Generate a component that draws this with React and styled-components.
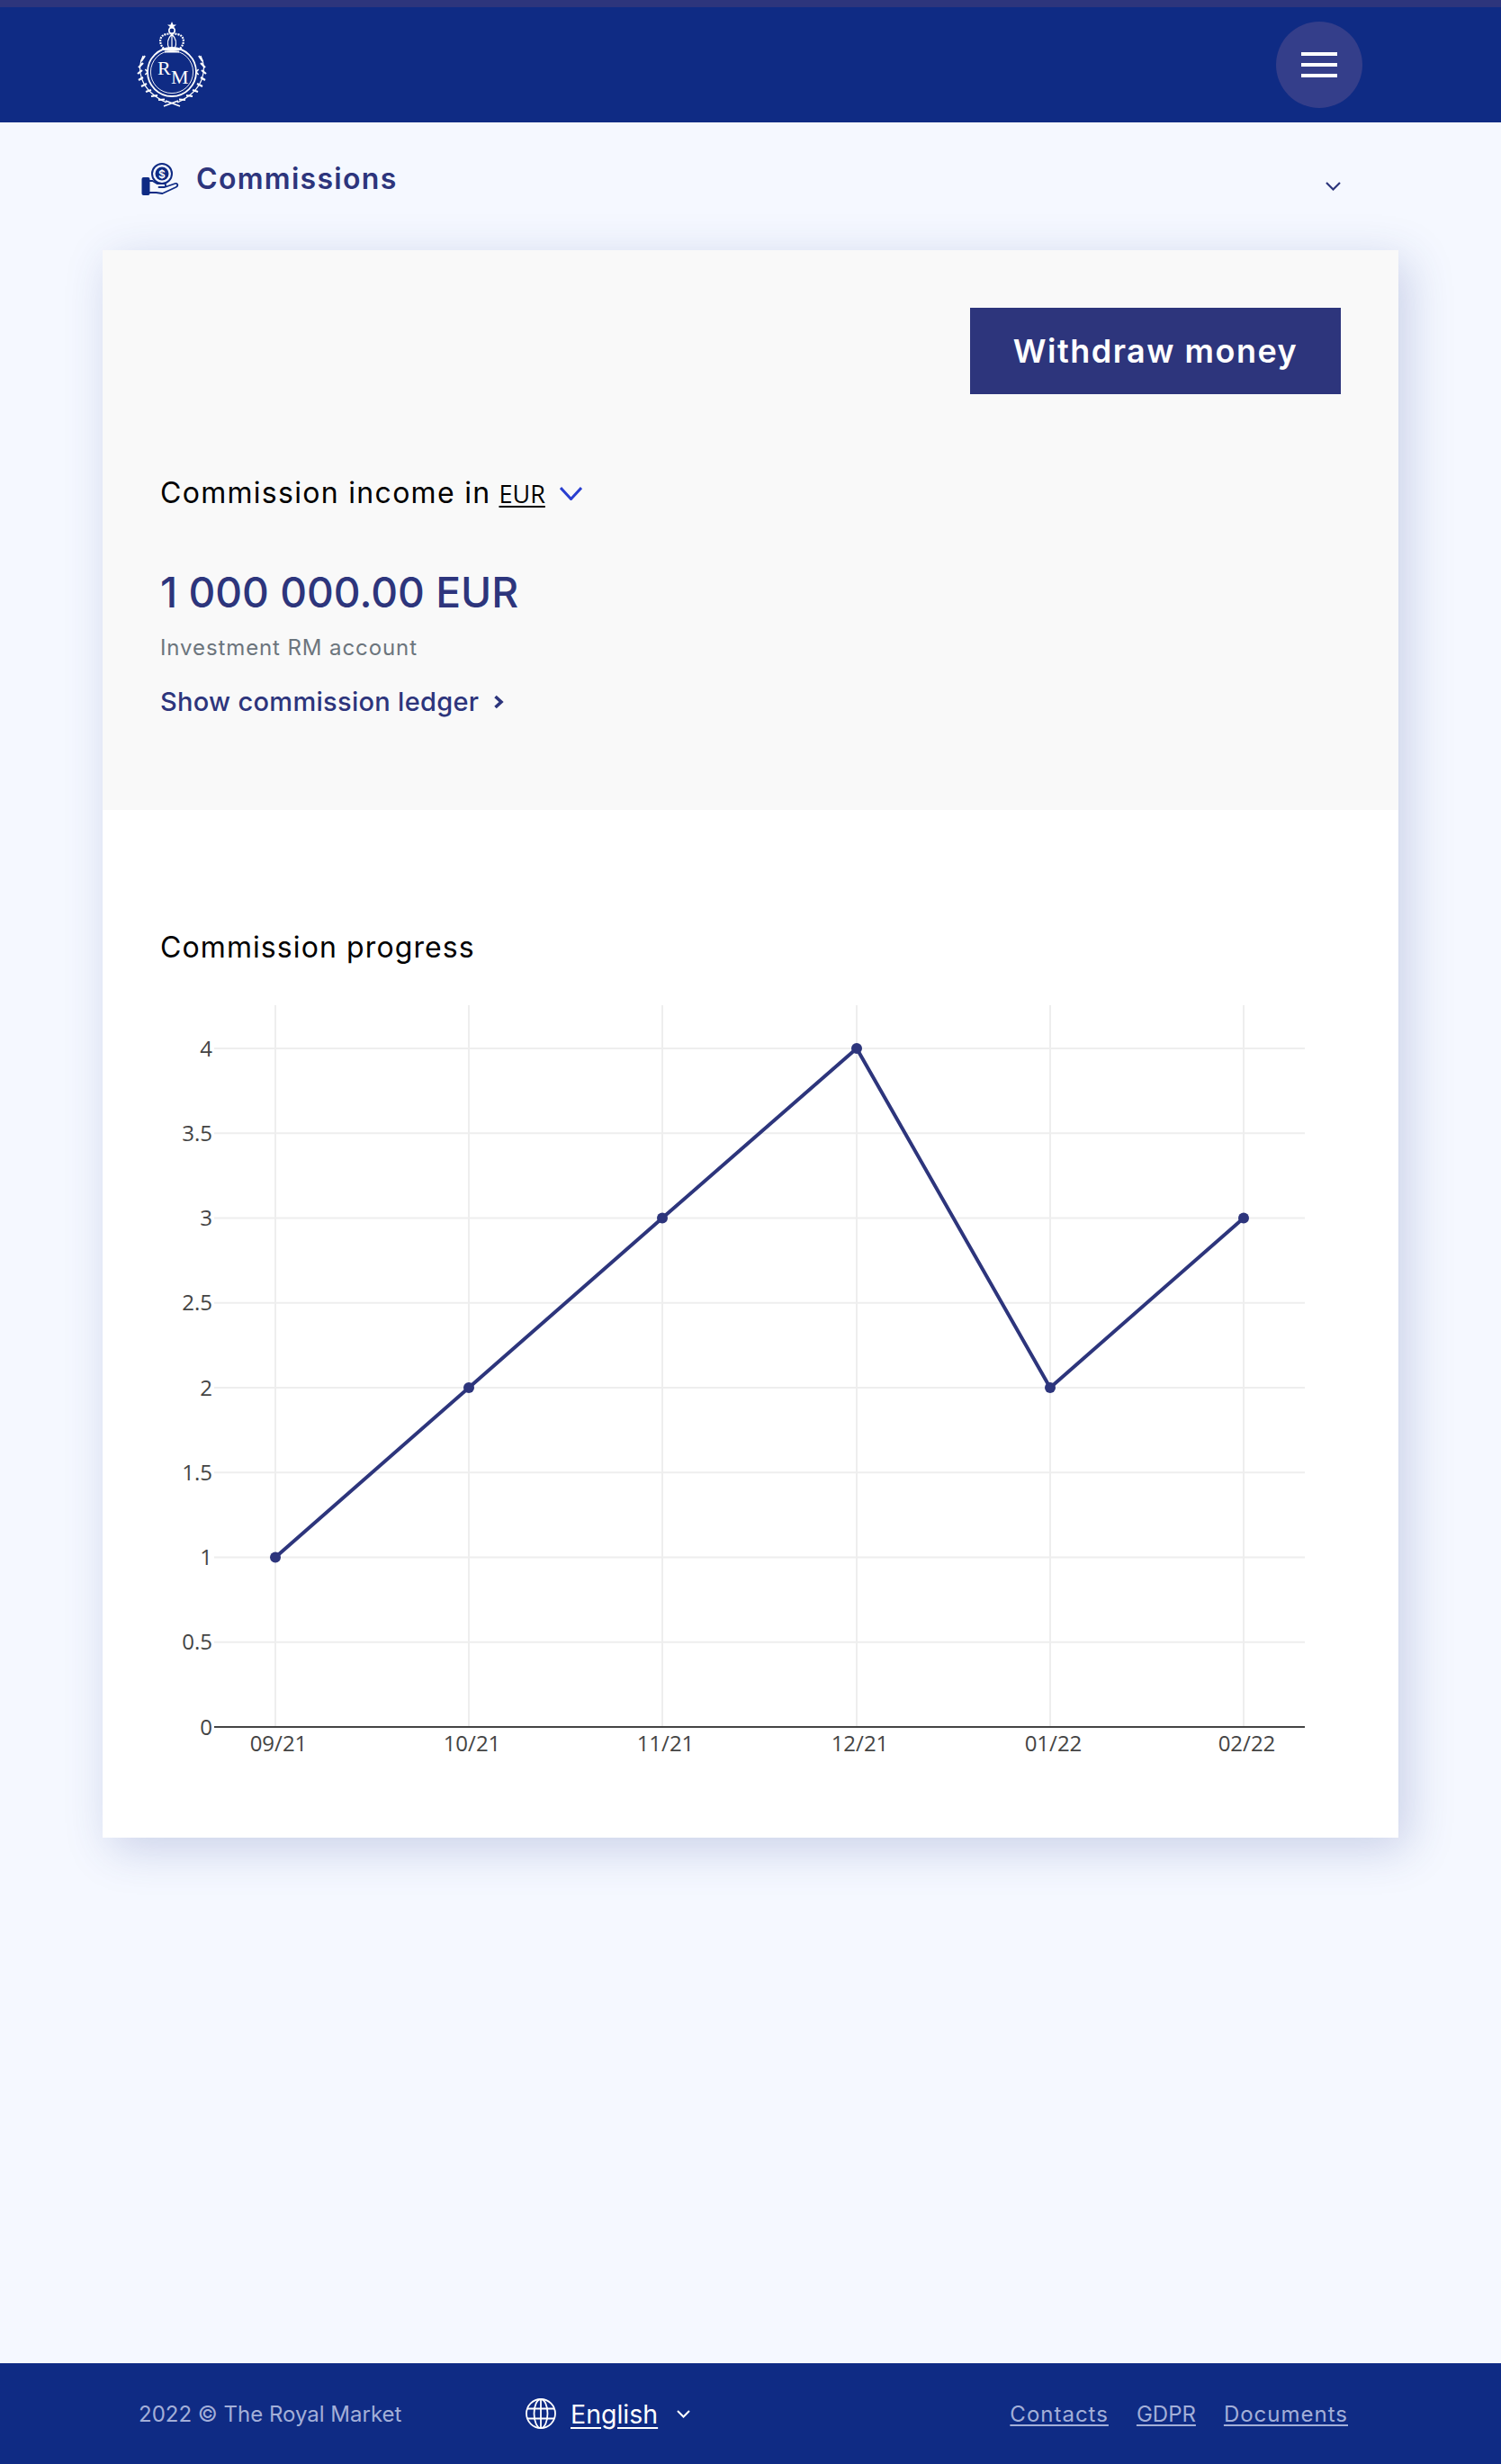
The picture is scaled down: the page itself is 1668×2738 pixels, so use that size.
import React from 'react';
import styled, { createGlobalStyle } from 'styled-components';

const Global = createGlobalStyle`
  html, body { margin: 0; padding: 0; background: #f5f8ff; }
  body { font-family: Inter, "Noto Sans", sans-serif; }
  * { box-sizing: border-box; }
`;
const Page = styled.div`
  min-height: 2738px; display: flex; flex-direction: column; background: #f5f8ff;
`;
const Header = styled.header`
  height: 136px; border-top: 8px solid #2d357c; background: #0f2b84;
  padding: 0 154px 0 152px; display: flex; align-items: center; justify-content: space-between;
`;
const MenuButton = styled.button`
  width: 96px; height: 96px; border: 0; border-radius: 50%; background: #343e8a; padding: 0;
  display: flex; flex-direction: column; align-items: center; justify-content: center; gap: 8px;
  span { display: block; width: 40px; height: 4px; background: #fff; }
`;
const Main = styled.main`flex: 1;`;
const TitleRow = styled.div`
  height: 142px; padding: 0 178px 0 157px; display: flex; align-items: flex-start; gap: 17px;
`;
const TitleIcon = styled.div`margin-top: 45px; height: 44px;`;
const Title = styled.h1`
  margin: 41px 0 0; font-size: 32px; line-height: 44px; font-weight: 600; color: #2d357c; flex: 1; letter-spacing: 1.3px;
`;
const TitleChevron = styled.div`margin-top: 66px; line-height: 0;`;
const Card = styled.section`
  width: 1440px; margin-left: 114px; background: #fff;
  box-shadow: 10px 12px 48px rgba(45, 70, 150, .22);
`;
const Summary = styled.div`
  height: 622px; background: #f9f9f9; padding: 64px 64px 0;
`;
const ButtonRow = styled.div`display: flex; justify-content: flex-end;`;
const Withdraw = styled.button`
  width: 412px; height: 96px; border: 0; background: #2d357c; color: #fff;
  font-family: inherit; font-size: 36px; font-weight: 600; padding: 0; letter-spacing: 1.5px;
`;
const IncomeLine = styled.div`
  margin-top: 86px; display: flex; align-items: baseline; font-size: 32px; line-height: 48px; color: #000; letter-spacing: 1.3px;
`;
const Currency = styled.span`
  margin-left: 9px; font-family: "Open Sans", sans-serif; font-size: 27px; letter-spacing: 0; text-decoration: underline; text-underline-offset: 3px;
`;
const IncomeChevron = styled.span`margin-left: 16px; align-self: center; display: flex;`;
const Amount = styled.div`
  margin-top: 49px; font-size: 46.200px; line-height: 72px; font-weight: 500; color: #2d357c;
`;
const Subtle = styled.div`margin-top: 8px; font-size: 24px; line-height: 36px; color: #6c757d; letter-spacing: .9px;`;
const Ledger = styled.a`
  margin-top: 20px; display: flex; align-items: center; gap: 16px; font-size: 29px; line-height: 44px; font-weight: 500; color: #2d357c; letter-spacing: .3px;
`;
const Progress = styled.div`padding: 129px 0 65px;`;
const ProgressTitle = styled.h2`
  margin: 0 0 0 64px; font-size: 32px; line-height: 48px; font-weight: 400; color: #000; letter-spacing: 1.100px;
`;
const ChartSvg = styled.svg`display: block; margin-top: 40px;`;
const Footer = styled.footer`
  height: 112px; background: #0f2b84; padding: 0 170px 0 154px; display: flex; align-items: center; font-size: 24px; color: #a3afd8;
`;
const Copy = styled.div`width: 430px;`;
const Lang = styled.div`display: flex; align-items: center; color: #fff; flex: 1;`;
const LangName = styled.span`margin: 0 21px 0 16px; font-size: 28.500px; text-decoration: underline; text-underline-offset: 4px;`;
const Links = styled.nav`display: flex; gap: 31px; letter-spacing: 1px;`;
const FootLink = styled.a`
  color: #a3afd8; text-decoration: underline; text-underline-offset: 3px;
  letter-spacing: ${(p) => (p.$tight ? '0' : '1px')};
`;

const Logo = () => (
  <svg width="78" height="96" viewBox="0 0 78 96" fill="none" stroke="#fff">
    <g transform="translate(39 0)">
      <path d="M0-0 L1.500 3.500 L5 3.500 L2.200 5.700 L3.300 9 L0 7 L-3.300 9 L-2.200 5.700 L-5 3.500 L-1.500 3.500Z" fill="#fff" stroke="none" />
      <circle cx="0" cy="10" r="3.200" strokeWidth="1.600" />
      <path d="M-9 30 C-15 24 -14 15 -6 14 C-2 13 2 13 6 14 C14 15 15 24 9 30" strokeWidth="2.200" strokeDasharray="2 1" />
      <path d="M-3 30 C-6 24 -4 18 0 14 C4 18 6 24 3 30M0 14V30" strokeWidth="1.200" />
      <path d="M-10 31 H10 M-8 33.500 H8" strokeWidth="2.200" />
    </g>
    <circle cx="39" cy="56" r="27" strokeWidth="1.800" />
    <circle cx="39" cy="56" r="23.600" strokeWidth=".9" />
    <text x="23" y="59" fontFamily="Liberation Serif, serif" fontSize="22" fill="#fff" stroke="none">R</text>
    <text x="38" y="69" fontFamily="Liberation Serif, serif" fontSize="22" fill="#fff" stroke="none">M</text>
    <path d="M12 56l-2.600-3M12 56l-2.600 3M66 56l2.600-3M66 56l2.600 3" strokeWidth="1.500" />
    <path d="M7 38 C0 52 2 76 33 90M71 38 C78 52 76 76 45 90" strokeWidth="1.200" />
    <path d="M5 44l4-6M2 51l5-5M1 58l5-4M2 65l5-3M5 72l6-3M10 78l6-2M16 83l7-1M24 87l7-.500M73 44l-4-6M76 51l-5-5M77 58l-5-4M76 65l-5-3M73 72l-6-3M68 78l-6-2M62 83l-7-1M54 87l-7-.500" strokeWidth="2.200" />
    <path d="M30 94 L46 88M48 94 L32 88" strokeWidth="1.600" />
  </svg>
);

const HandCoin = () => (
  <svg width="44" height="40" viewBox="0 0 44 40" fill="none" stroke="#0f2b84">
    <rect x="0.500" y="16" width="9" height="20" rx="2" fill="#0f2b84" stroke="none" />
    <circle cx="23" cy="12" r="11" strokeWidth="2" />
    <circle cx="23" cy="12" r="7.500" fill="#0f2b84" stroke="none" />
    <text x="23" y="16.500" textAnchor="middle" fontFamily="Inter, sans-serif" fontSize="12" fontWeight="600" fill="#fff" stroke="none">$</text>
    <path d="M9.500 20h3l5 3h8c2 0 2 4 0 4h-6M9.500 33h7l7 1 15-7c3-1.500 2-5-1-4l-10 3.500" strokeWidth="1.800" strokeLinejoin="round" strokeLinecap="round" />
  </svg>
);

const Chevron = ({ w = 17, h = 10, color = '#2d357c', sw = 2.2 }) => (
  <svg width={w} height={h} viewBox={`0 0 ${w} ${h}`} fill="none" stroke={color} strokeWidth={sw}>
    <path d={`M1 1 L${w / 2} ${h - 1.500} L${w - 1} 1`} />
  </svg>
);

const ChevronRight = () => (
  <svg width="12" height="16" viewBox="0 0 12 16" fill="none" stroke="#2d357c" strokeWidth="3.600">
    <path d="M2.500 2 L9 8 L2.500 14" />
  </svg>
);

const Globe = () => (
  <svg width="34" height="34" viewBox="0 0 34 34" fill="none" stroke="#fff" strokeWidth="1.800">
    <circle cx="17" cy="17" r="16" />
    <ellipse cx="17" cy="17" rx="7.500" ry="16" />
    <path d="M17 1V33M2 11.500H32M2 22.500H32" />
  </svg>
);

const xs = [306, 521, 736, 952, 1167, 1382];
const xLabels = ['09/21', '10/21', '11/21', '12/21', '01/22', '02/22'];
const ticks = [0, 0.5, 1, 1.5, 2, 2.5, 3, 3.5, 4];
const values = [1, 2, 3, 4, 2, 3];
const ORIGIN_X = 114;
const TOP = 1118;
const yAt = (v) => 1920 - TOP - v * 188.5;
const xAt = (x) => x - ORIGIN_X;

const Chart = () => (
  <ChartSvg width="1440" height="860" viewBox="0 0 1440 860" fill="none">
    {xs.map((x) => <path key={x} d={`M${xAt(x)} 0V802`} stroke="#eee" strokeWidth="2" />)}
    {ticks.slice(1).map((t) => <path key={t} d={`M124 ${yAt(t)}H1336`} stroke="#eee" strokeWidth="2" />)}
    <path d="M124 802H1336" stroke="#444" strokeWidth="2" />
    {ticks.map((t) => (
      <text key={t} x="122" y={yAt(t) + 8.500} textAnchor="end" fontFamily="Open Sans, sans-serif" fontSize="24" fill="#444">{t}</text>
    ))}
    {xs.map((x, i) => (
      <text key={x} x={xAt(x) + 3.500} y="828.500" textAnchor="middle" fontFamily="Open Sans, sans-serif" fontSize="24" fill="#444">{xLabels[i]}</text>
    ))}
    <polyline points={xs.map((x, i) => `${xAt(x)},${yAt(values[i])}`).join(' ')} stroke="#2d357c" strokeWidth="4" strokeLinejoin="round" />
    {xs.map((x, i) => <circle key={x} cx={xAt(x)} cy={yAt(values[i])} r="6" fill="#2d357c" />)}
  </ChartSvg>
);

export default function App() {
  return (
    <Page>
      <Global />
      <Header>
        <Logo />
        <MenuButton aria-label="Menu"><span /><span /><span /></MenuButton>
      </Header>
      <Main>
        <TitleRow>
          <TitleIcon><HandCoin /></TitleIcon>
          <Title>Commissions</Title>
          <TitleChevron><Chevron /></TitleChevron>
        </TitleRow>
        <Card>
          <Summary>
            <ButtonRow><Withdraw>Withdraw money</Withdraw></ButtonRow>
            <IncomeLine>
              Commission income in
              <Currency>EUR</Currency>
              <IncomeChevron><Chevron w={25} h={15} color="#2a3fd0" sw={3} /></IncomeChevron>
            </IncomeLine>
            <Amount>1 000 000.00 EUR</Amount>
            <Subtle>Investment RM account</Subtle>
            <Ledger>Show commission ledger <ChevronRight /></Ledger>
          </Summary>
          <Progress>
            <ProgressTitle>Commission progress</ProgressTitle>
            <Chart />
          </Progress>
        </Card>
      </Main>
      <Footer>
        <Copy>2022 © The Royal Market</Copy>
        <Lang>
          <Globe />
          <LangName>English</LangName>
          <Chevron w={15} h={9} color="#fff" sw={2} />
        </Lang>
        <Links>
          <FootLink>Contacts</FootLink>
          <FootLink $tight>GDPR</FootLink>
          <FootLink>Documents</FootLink>
        </Links>
      </Footer>
    </Page>
  );
}
